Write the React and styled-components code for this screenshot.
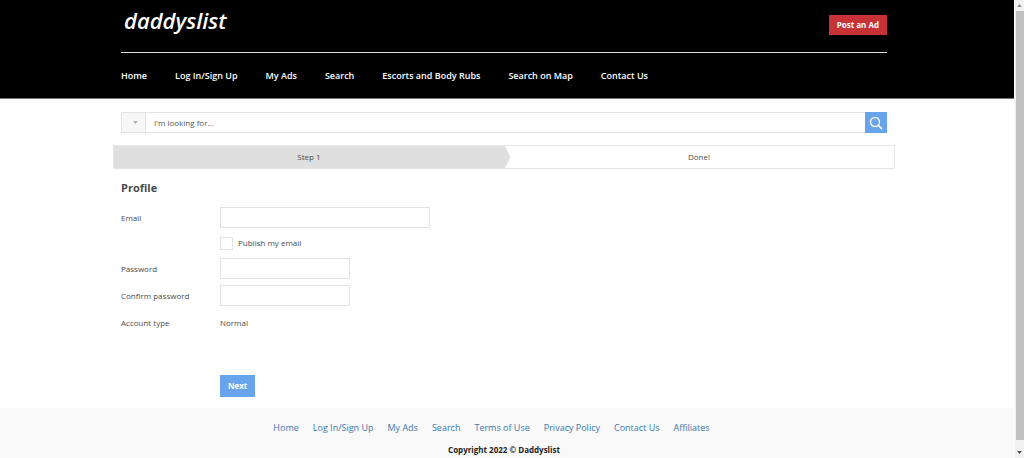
import React from "react";
import styled, { createGlobalStyle } from "styled-components";

const GlobalStyle = createGlobalStyle`
  *, *::before, *::after { box-sizing: border-box; }
  body {
    margin: 0;
    background: #fff;
    color: #4a4a4a;
    font: 8px/12px "Open Sans", "Noto Sans", sans-serif;
    overflow: hidden;
  }
  button, input, select { font: inherit; color: inherit; margin: 0; border-radius: 0; }
  button { cursor: pointer; }
  a { text-decoration: none; }
`;

const Window = styled.div`
  display: grid;
  grid-template-columns: minmax(0, 1fr) 10px;
  height: 100vh;
`;

const Page = styled.div`
  display: flex;
  flex-direction: column;
  min-height: 100vh;
`;

const Container = styled.div`
  width: 100%;
  max-width: ${(p) => (p.$wide ? "782px" : "766px")};
  margin: 0 auto;
`;

const Header = styled.header`
  background: #000;
  color: #fff;
  padding-right: 6px;
  border-bottom: 1px solid #777;
`;

const Masthead = styled.div`
  display: flex;
  justify-content: space-between;
  align-items: flex-start;
  height: 53px;
  padding-top: 4px;
  border-bottom: 1px solid #ddd;
`;

const Logo = styled.a`
  padding-left: 3px;
  color: #fff;
  font: italic 600 22px/32px "Open Sans", sans-serif;
`;

const Button = styled.button`
  border: 0;
  padding: 0 8px;
  height: 22px;
  background: ${(p) => (p.$danger ? "#c73237" : "#68a4ec")};
  color: #fff;
  font-weight: 700;
  line-height: 20px;
`;

const PostButton = styled(Button)`
  height: 20px;
  margin-top: 11px;
`;

const MainNav = styled.nav`
  display: flex;
  gap: 28px;
  padding: 17px 0 16px;

  a {
    color: #fff;
    font-size: 9px;
    font-weight: 600;
    line-height: 12px;
  }
`;

const Content = styled.main`
  padding: 13px 6px 11px 0;
`;

const SearchBar = styled.form`
  display: flex;
  height: 21px;
  margin-bottom: 12px;
`;

const CategoryPicker = styled.div`
  position: relative;
  flex: 0 0 25px;
  background: #f7f7f7;
  border: 1px solid #e2e2e2;

  select {
    width: 100%;
    height: 100%;
    appearance: none;
    border: 0;
    background: none;
  }
  svg {
    position: absolute;
    left: 11px;
    top: 8px;
    pointer-events: none;
  }
`;

const SearchInput = styled.input`
  flex: 1;
  min-width: 0;
  padding: 0 8px;
  border: 1px solid #e2e2e2;
  border-width: 1px 0;

  &::placeholder { color: #555; opacity: 1; }
`;

const SearchButton = styled(Button)`
  display: grid;
  place-items: center;
  flex: 0 0 22px;
  height: 21px;
  padding: 0;
`;

const Steps = styled.ol`
  display: grid;
  grid-template-columns: 1fr 1fr;
  height: 24px;
  margin: 0;
  padding: 0;
  list-style: none;
  border: 1px solid #e6e6e6;
`;

const Step = styled.li`
  position: relative;
  text-align: center;
  line-height: 22px;
  background: ${(p) => (p.$active ? "#dfdfdf" : "#fff")};

  svg {
    position: absolute;
    left: 100%;
    top: 0;
    z-index: 1;
  }
`;

const Title = styled.h1`
  margin: 11px 0 12px;
  font-size: 11px;
  line-height: 15px;
  font-weight: 700;
`;

const Row = styled.div`
  display: grid;
  grid-template-columns: 99px minmax(0, 1fr);
  align-items: center;
  min-height: ${(p) => (p.$short ? "18px" : "21px")};
  margin-bottom: ${(p) => (p.$last ? "42px" : "6px")};
`;

const TextInput = styled.input`
  width: 100%;
  max-width: ${(p) => (p.$long ? "210px" : "130px")};
  height: 21px;
  padding: 0 6px;
  border: 1px solid #e2e2e2;
  background: #fff;
`;

const Check = styled.label`
  grid-column: 2;
  display: flex;
  align-items: center;
  gap: 5px;

  input {
    appearance: none;
    width: 13px;
    height: 13px;
    border: 1px solid #e2e2e2;
    background: #fff;
  }
  input:checked { background: #68a4ec; }
`;

const Actions = styled.div`
  padding-left: 99px;
  display: flex;
`;

const Footer = styled.footer`
  flex: 1;
  background: #f9f9f9;
  padding: 14px 6px 2px 0;
  text-align: center;
`;

const FooterNav = styled.nav`
  display: flex;
  justify-content: center;
  gap: 14px;
  padding-right: 25px;
  margin-bottom: 10px;

  a {
    color: #3b77ae;
    font-size: 9px;
  }
`;

const Copyright = styled.strong`
  display: block;
  color: #222;
`;

const ScrollTrack = styled.div`
  display: flex;
  flex-direction: column;
  align-items: center;
  padding: 4px 0;
  background: #f1f1f1;
  border-left: 1px solid #f8f8f8;
`;

const ScrollThumb = styled.div`
  align-self: stretch;
  flex: 1;
  margin: 4px 0 11px 1px;
  background: #c1c1c1;
`;

const menu = ["Home", "Log In/Sign Up", "My Ads", "Search", "Escorts and Body Rubs", "Search on Map", "Contact Us"];
const footerMenu = ["Home", "Log In/Sign Up", "My Ads", "Search", "Terms of Use", "Privacy Policy", "Contact Us", "Affiliates"];

function Arrow({ up, color = "#444" }) {
  return (
    <svg width="5" height="3" viewBox="0 0 6 4" aria-hidden="true">
      <path d={up ? "M0 4 3 0 6 4Z" : "M0 0 3 4 6 0Z"} fill={color} />
    </svg>
  );
}

export default function App() {
  return (
    <Window>
      <GlobalStyle />
      <Page>
        <Header>
          <Container>
            <Masthead>
              <Logo href="#">daddyslist</Logo>
              <PostButton $danger type="button">Post an Ad</PostButton>
            </Masthead>
            <MainNav aria-label="Main">
              {menu.map((m) => <a href="#" key={m}>{m}</a>)}
            </MainNav>
          </Container>
        </Header>
        <Content>
          <Container>
            <SearchBar onSubmit={(e) => e.preventDefault()}>
              <CategoryPicker>
                <select aria-label="Category" defaultValue="">
                  <option value="" aria-label="All" />
                </select>
                <Arrow color="#aaa" />
              </CategoryPicker>
              <SearchInput aria-label="Search" placeholder="I'm looking for..." />
              <SearchButton type="submit" aria-label="Search">
                <svg width="14" height="14" viewBox="0 0 14 14" fill="none" stroke="#fff" strokeLinecap="round">
                  <circle cx="6" cy="6" r="4.5" strokeWidth="1.3" />
                  <path d="m9.5 9.5 3 3" strokeWidth="1.7" />
                </svg>
              </SearchButton>
            </SearchBar>
          </Container>
          <Container $wide>
            <Steps>
              <Step $active>
                Step 1
                <svg width="7" height="22" viewBox="0 0 7 22" aria-hidden="true">
                  <path d="M0 0h1L6.500 11 1 22H0Z" fill="#dfdfdf" />
                </svg>
              </Step>
              <Step>Done!</Step>
            </Steps>
          </Container>
          <Container as="form" onSubmit={(e) => e.preventDefault()}>
            <Title>Profile</Title>
            <Row>
              <label htmlFor="email">Email</label>
              <TextInput $long id="email" type="email" />
            </Row>
            <Row $short>
              <Check><input type="checkbox" />Publish my email</Check>
            </Row>
            <Row>
              <label htmlFor="password">Password</label>
              <TextInput id="password" type="password" />
            </Row>
            <Row>
              <label htmlFor="confirm">Confirm password</label>
              <TextInput id="confirm" type="password" />
            </Row>
            <Row $last>
              <span>Account type</span>
              <span>Normal</span>
            </Row>
            <Actions><Button type="submit">Next</Button></Actions>
          </Container>
        </Content>
        <Footer>
          <FooterNav aria-label="Footer">
            {footerMenu.map((m) => <a href="#" key={m}>{m}</a>)}
          </FooterNav>
          <Copyright>Copyright 2022 © Daddyslist</Copyright>
        </Footer>
      </Page>
      <ScrollTrack aria-hidden="true">
        <Arrow up color="#888" />
        <ScrollThumb />
        <Arrow />
      </ScrollTrack>
    </Window>
  );
}
